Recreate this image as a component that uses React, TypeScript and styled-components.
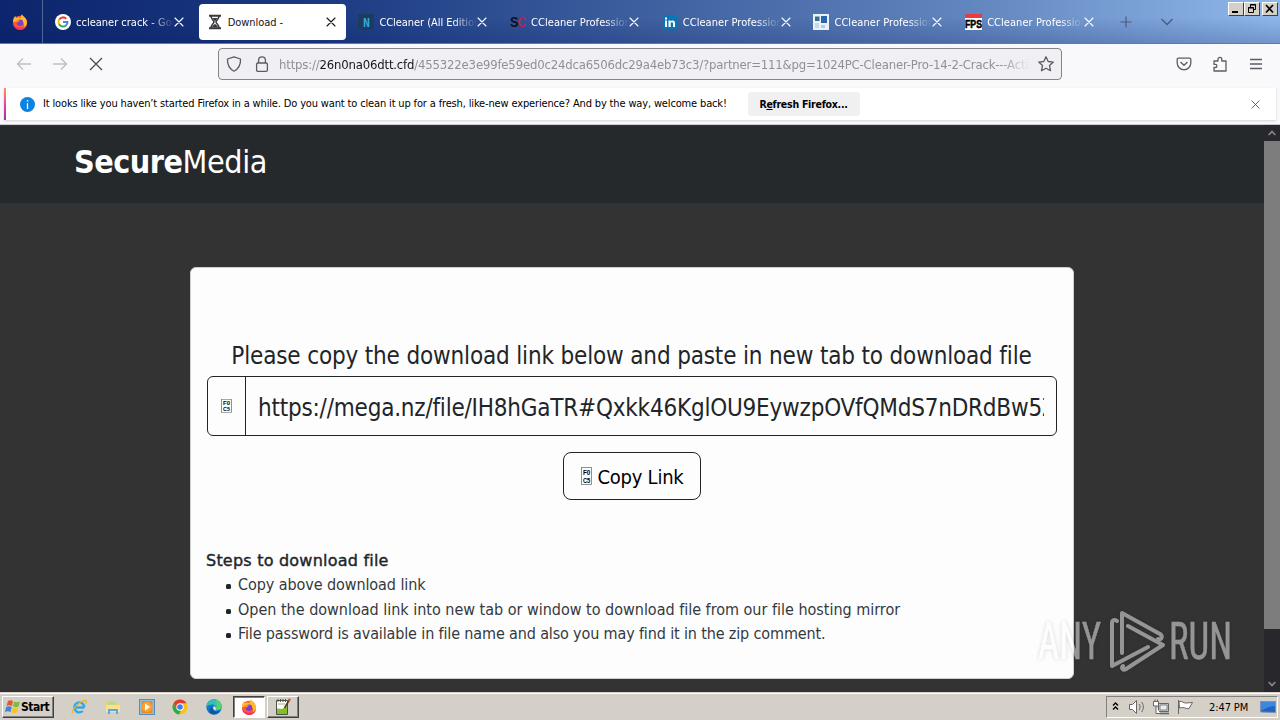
import React from 'react'

import styled, { createGlobalStyle } from 'styled-components'

const UI_FONT = `'DejaVu Sans Condensed', 'DejaVu Sans', 'Noto Sans', sans-serif`

const GlobalStyle = createGlobalStyle`
  * {
    box-sizing: border-box;
  }
  body {
    margin: 0;
    overflow: hidden;
    font-family: ${UI_FONT};
    font-stretch: condensed;
    color: #000;
  }
`

const Screen = styled.div`
  position: relative;
  width: 1280px;
  height: 720px;
  display: flex;
  flex-direction: column;
  overflow: hidden;
`

const TabBar = styled.div`
  display: flex;
  height: 44px;
  flex: none;
  background: linear-gradient(to bottom, transparent 40%, rgba(0, 20, 90, 0.2)),
    linear-gradient(to right, #0c256c 0%, #1b3a82 25%, #3d5f9f 50%, #6084bd 75%, #8fb8ea 100%);
  border-bottom: 1px solid #6f7889;
`

const PinnedTab = styled.div`
  display: flex;
  align-items: center;
  width: 43px;
  padding-left: 12px;
  border-right: 1px solid #50689c;
`

const Tabs = styled.div`
  display: flex;
  padding: 4px 0 3px 4px;
`

const Tab = styled.div<{ $active?: boolean }>`
  display: flex;
  align-items: center;
  width: 147px;
  margin-right: 4.7px;
  padding: 0 10px 0 8px;
  border-radius: 4px;
  background: ${(p) => (p.$active ? '#fff' : 'transparent')};
  color: ${(p) => (p.$active ? '#15141a' : '#fff')};
  font-size: 11px;
`

const TabTitle = styled.span<{ $spacing: number; $fade: boolean }>`
  flex: 1;
  margin-left: 5px;
  padding-top: 2px;
  overflow: hidden;
  white-space: nowrap;
  line-height: 16px;
  letter-spacing: ${(p) => p.$spacing}px;
  mask-image: ${(p) => (p.$fade ? 'linear-gradient(to left, transparent, #000 24px)' : 'none')};
`

const TabActions = styled.div`
  display: flex;
  align-items: center;
  gap: 29px;
  margin: 1px 0 0 11px;
  color: #4a5a7d;
`

const WindowControls = styled.div`
  display: flex;
  margin: 2px 2px 0 auto;
`

const WindowButton = styled.div<{ $gap?: boolean }>`
  width: 16px;
  height: 14px;
  margin-left: ${(p) => (p.$gap ? 2 : 0)}px;
  background: #d4d0c8;
  border: 1px solid;
  border-color: #fff #404040 #404040 #fff;
  svg {
    display: block;
  }
`

const Toolbar = styled.div`
  display: flex;
  align-items: center;
  height: 44px;
  flex: none;
  padding: 0 16px;
  padding-bottom: 4px;
  background: #f9f9fb;
  color: #5b5b66;
`

const NavButtons = styled.div`
  display: flex;
  align-items: center;
  gap: 20px;
  width: 202px;
`

const UrlBar = styled.div`
  display: flex;
  align-items: center;
  width: 844px;
  height: 32px;
  padding: 0 7px;
  border: 1px solid #83838a;
  border-radius: 4px;
  background: #f0f0f4;
`

const UrlText = styled.div`
  width: 752px;
  margin: 0 7px 0 9px;
  padding-top: 2px;
  overflow: hidden;
  white-space: nowrap;
  font-size: 13px;
  line-height: 18px;
  letter-spacing: -0.18px;
  color: #8f8f98;
  mask-image: linear-gradient(to left, transparent, #000 32px);
  b {
    font-weight: 400;
    color: #15141a;
  }
`

const UrlIcon = styled.span`
  display: flex;
  margin-right: 12px;
`

const ToolbarActions = styled.div`
  display: flex;
  align-items: center;
  gap: 20px;
  margin-left: auto;
`

const NoticeArea = styled.div`
  height: 37px;
  flex: none;
  padding: 0 4px;
  background: #f9f9fb;
  border-bottom: 1px solid #c9c9cd;
`

const Notice = styled.div`
  display: flex;
  align-items: center;
  height: 32px;
  padding: 0 16px 0 14px;
  border-left: 2px solid;
  border-image: linear-gradient(#ff9a56, #e64fa0 45%, #952bb9) 1;
  background: #fff;
  box-shadow: 0 1px 2px rgba(58, 57, 68, 0.2);
  font-size: 11px;
`

const NoticeText = styled.span`
  width: 697px;
  margin: -2px 0 0 8px;
  white-space: nowrap;
  letter-spacing: -0.15px;
`

const RefreshButton = styled.button`
  width: 112px;
  height: 24px;
  margin-left: 8px;
  padding: 0 1px 0 0;
  border: 0;
  border-radius: 4px;
  background: #f0f0f1;
  font-family: ${UI_FONT};
  font-size: 10.5px;
  font-weight: 700;
  letter-spacing: -0.25px;
  white-space: nowrap;
`

const NoticeClose = styled.span`
  display: flex;
  margin-left: auto;
  color: #55555f;
`

const Viewport = styled.div`
  display: flex;
  height: 567px;
  flex: none;
`

const Page = styled.main`
  flex: 1;
  overflow: hidden;
  background: #333;
  color: #212529;
`

const SiteHeader = styled.header`
  height: 80px;
  padding: 13px 74px 0;
  border-top: 1px solid #333;
  border-bottom: 2px solid #2e3336;
  background: #25292c;
  color: #fff;
`

const Brand = styled.div`
  font-size: 32px;
  line-height: 46px;
  letter-spacing: -0.4px;
  white-space: nowrap;
  b {
    font-weight: 700;
    letter-spacing: -0.5px;
  }
`

const Card = styled.section`
  width: 884px;
  height: 412px;
  margin: 62px auto 0 190px;
  padding: 70px 16px 0 15px;
  border: 1px solid #d0d0d0;
  border-radius: 6px;
  background: #fdfdfd;
`

const Prompt = styled.h1`
  margin: 0;
  text-align: center;
  font-size: 24px;
  font-weight: 400;
  line-height: 36px;
  letter-spacing: -0.16px;
  white-space: nowrap;
`

const LinkGroup = styled.div`
  display: flex;
  width: 850px;
  height: 60px;
  margin: 2px 0 0 1px;
  border: 1px solid #212529;
  border-radius: 6px;
`

const LinkIcon = styled.div`
  display: flex;
  align-items: center;
  justify-content: center;
  width: 38px;
  border-right: 1px solid #212529;
`

const LinkText = styled.div`
  flex: 1;
  margin: 0 12px;
  padding-top: 1px;
  overflow: hidden;
  white-space: nowrap;
  font-size: 24px;
  line-height: 60px;
  letter-spacing: -0.21px;
`

const CopyButton = styled.button`
  display: flex;
  align-items: center;
  justify-content: center;
  gap: 6px;
  width: 138px;
  height: 48px;
  margin: 16px auto 0 357px;
  padding: 0;
  border: 1px solid #212529;
  border-radius: 8px;
  background: transparent;
  font-family: ${UI_FONT};
  font-size: 20px;
  letter-spacing: -0.25px;
  color: #000;
  white-space: nowrap;
`

const CopyLabel = styled.span`
  padding-top: 2px;
`

const Steps = styled.div`
  margin-top: 49px;
  font-size: 16px;
  line-height: 24.4px;
`

const StepsTitle = styled.div`
  font-family: 'DejaVu Sans', sans-serif;
  font-stretch: normal;
  -webkit-text-stroke: 0.4px #212529;
  letter-spacing: 0.22px;
`

const StepList = styled.ul`
  margin: 0;
  padding: 0 0 0 20px;
  list-style: none;
`

const Step = styled.li<{ $spacing: number }>`
  display: flex;
  align-items: center;
  white-space: nowrap;
  color: #35393d;
  letter-spacing: ${(p) => p.$spacing}px;
  &::before {
    content: '';
    width: 5px;
    height: 5px;
    margin: 2px 7px 0 0;
    border-radius: 1.5px;
    background: #212529;
  }
`

const Scrollbar = styled.div`
  display: flex;
  flex-direction: column;
  align-items: center;
  width: 16px;
  background: #28272c;
  color: #85858b;
`

const ScrollArrow = styled.div`
  display: flex;
  align-items: center;
  height: 16px;
`

const ScrollThumb = styled.div`
  width: 16px;
  height: 488px;
  margin-bottom: auto;
  background: #7d7d7d;
`

const Taskbar = styled.div`
  display: flex;
  height: 28px;
  flex: none;
  padding-top: 3px;
  border-top: 1px solid #d4d0c8;
  background: #d4d0c8;
  box-shadow: inset 0 1px 0 #fff;
  font-size: 11px;
`

const StartButton = styled.div`
  display: flex;
  align-items: center;
  width: 52px;
  height: 22px;
  margin: 0 17px 0 2px;
  padding-left: 2px;
  border: 1px solid;
  border-color: #fff #404040 #404040 #fff;
  box-shadow: inset -1px -1px 0 #808080;
  font-size: 12px;
  font-weight: 700;
  letter-spacing: -0.5px;
`

const QuickLaunch = styled.div`
  display: flex;
  align-items: center;
  height: 22px;
  width: 162px;
  gap: 17.8px;
`

const TaskButton = styled.div<{ $pressed?: boolean }>`
  display: flex;
  align-items: center;
  justify-content: center;
  width: 32px;
  height: 22px;
  margin-right: 2px;
  border: 1px solid;
  border-color: ${(p) => (p.$pressed ? '#404040 #fff #fff #404040' : '#fff #404040 #404040 #fff')};
  box-shadow: ${(p) => (p.$pressed ? 'inset 1px 1px 0 #808080' : 'inset -1px -1px 0 #808080')};
  background: ${(p) => (p.$pressed ? '#fff' : 'transparent')};
`

const Tray = styled.div`
  display: flex;
  align-items: center;
  width: 172px;
  height: 22px;
  margin: 0 2px 0 auto;
  padding-left: 5px;
  border: 1px solid;
  border-color: #808080 #fff #fff #808080;
`

const Clock = styled.span`
  width: 41px;
  margin: 0 10px 0 15px;
  white-space: nowrap;
  letter-spacing: -0.1px;
`

const Watermark = styled.svg`
  position: absolute;
  left: 1034px;
  top: 604px;
  filter: drop-shadow(0 0 2px rgba(0, 0, 0, 0.3));
`

const CloseIcon = ({ size = 10, width = 1.1 }: { size?: number; width?: number }) => (
  <svg width={size} height={size} viewBox="0 0 10 10" stroke="currentColor" strokeWidth={width} strokeLinecap="round">
    <path d="M1 1l8 8M9 1L1 9" />
  </svg>
)

const FirefoxIcon = () => (
  <svg width="16" height="16" viewBox="0 0 16 16">
    <circle cx="8" cy="8.8" r="7" fill="#ff5a35" />
    <path d="M1 8C.8 5.500 2 3 3.300 2l.8 2C6 3 8 3.500 9 4 8.500 2.500 9 1 10 .2c.5 2 4.800 3.300 5 8 0 3-2 5.500-4 6.500 2-3 1.500-7-2-8z" fill="#ffb92c" />
    <path d="M1 9c0 4 3.400 7 7 7 3.500 0 6.500-2 7-5.800-2 3-4.500 4-7 3.500C4 13.300 2 11.500 1 9z" fill="#f5315c" />
    <circle cx="8" cy="8.800" r="3.200" fill="#7b3fd0" />
    <path d="M3.500 6.500c2-1 3.500-.5 5 .2-1 .2-2.200.8-2.500 1.900-1.200-.2-2.200-1-2.500-2.100z" fill="#ff8b21" />
  </svg>
)

const GoogleIcon = () => (
  <svg width="16" height="16" viewBox="0 0 16 16" fill="none" strokeWidth="2">
    <circle cx="8" cy="8" r="8" fill="#fff" />
    <path d="M4.200 5.500A4.500 4.500 0 0 1 11.300 4.800" stroke="#ea4335" />
    <path d="M4.100 10.300a4.600 4.600 0 0 1 0-4.700" stroke="#fbbc05" />
    <path d="M11 11.400a4.500 4.500 0 0 1-6.900-1.100" stroke="#34a853" />
    <path d="M8 8h4.500c0 1.400-.5 2.600-1.600 3.500" stroke="#4285f4" />
  </svg>
)

const HourglassIcon = () => (
  <svg width="16" height="16" viewBox="0 0 16 16" fill="none" stroke="#38383d" strokeWidth="1.500">
    <path d="M2 1.700h12M2 14.300h12" strokeWidth="2" />
    <path d="M4 2c0 3.500 3 4.500 3 6s-3 2.500-3 6M12 2c0 3.500-3 4.500-3 6s3 2.500 3 6" />
    <path d="M5.500 4h5L8 7.500zM5 13.500c.5-2 2-3 3-3.500 1 .5 2.500 1.500 3 3.500z" fill="#38383d" stroke="none" />
  </svg>
)

const LetterN = () => (
  <svg width="16" height="16" viewBox="0 0 16 16">
    <rect width="16" height="16" fill="#1d3a63" />
    <text x="5" y="12.500" fontSize="13" fontWeight="700" fill="#32a9d6" textLength="7" lengthAdjust="spacingAndGlyphs">N</text>
  </svg>
)

const LettersSC = () => (
  <svg width="16" height="16" viewBox="0 0 16 16" fontFamily="Liberation Sans" fontSize="15" fontWeight="700">
    <text x="0" y="12.500" fill="#0b1024" textLength="8.500" lengthAdjust="spacingAndGlyphs">S</text>
    <text x="7.500" y="12.500" fill="#b52350" textLength="8.500" lengthAdjust="spacingAndGlyphs">C</text>
  </svg>
)

const LinkedinIcon = () => (
  <svg width="16" height="16" viewBox="0 0 16 16">
    <rect x="1" y="1" width="14" height="14" rx="1" fill="#0a77b5" />
    <path d="M3 6.500h2V13H3zM3 3.500h2v2H3zM6.500 6.500h2v1c1-1.700 4.500-1.600 4.500 1.500v4h-2V9.500c0-1.700-2.300-1.700-2.300 0V13H6.500z" fill="#fff" />
  </svg>
)

const SquaresIcon = () => (
  <svg width="16" height="16" viewBox="0 0 16 16">
    <rect width="16" height="16" fill="#e9f2fa" />
    <path d="M2 2.500h4.500V7H2z" fill="#376f86" />
    <path d="M8 2h6v7H8z" fill="#2b63ad" />
    <path d="M2 9h4v5H2z" fill="#c4d8ef" />
    <path d="M8 11h4v3H8z" fill="#b3cbe8" />
  </svg>
)

const FpsIcon = () => (
  <svg width="17" height="16" viewBox="0 0 17 16">
    <rect width="17" height="16" fill="#fff" />
    <rect width="17" height="4" fill="#e83b42" />
    <text x="0" y="13.500" fontFamily="Liberation Sans" fontSize="10" fontWeight="700" stroke="#000" strokeWidth=".5" textLength="17" lengthAdjust="spacingAndGlyphs">FPS</text>
  </svg>
)

// Box the browser shows for a private-use code point it has no glyph for
const MissingGlyph = ({ height = 18 }: { height?: number }) => (
  <svg width="11" height={height} viewBox="0 0 11 18" fontFamily="Liberation Sans" fontSize="8" fontWeight="700" preserveAspectRatio="none">
    <rect x=".5" y=".5" width="10" height="17" fill="none" stroke="#777" strokeWidth=".8" />
    <text x="2" y="8.300" textLength="7" lengthAdjust="spacingAndGlyphs">F0</text>
    <text x="2" y="15.800" textLength="7" lengthAdjust="spacingAndGlyphs">C5</text>
  </svg>
)

const StartFlag = () => (
  <svg width="16" height="16" viewBox="0 0 16 16">
    <path d="M3 2c2-1 3-.8 5 0L7 7C5 6 3.500 6 1.500 7z" fill="#e8582b" />
    <path d="M9 2.500c2 1 4 1 6 0l-1.500 5c-2 1-3.500.8-5.500 0z" fill="#7dbb42" />
    <path d="M1.200 8c2-1 3.500-1 5.500 0l-1.200 5C3.500 12 2 12 0 13z" fill="#3d86d8" />
    <path d="M7.700 8.500c2 1 3.500 1 5.500 0L12 13.500c-2 1-3.500 1-5.500 0z" fill="#f6c32c" />
  </svg>
)

const ExplorerIcon = () => (
  <svg width="16" height="16" viewBox="0 0 16 16" fill="none">
    <path d="M13.300 8.500H4.200M13.300 8.500a5 5 0 1 0-1.500 3.500" stroke="#35a6e5" strokeWidth="2.300" />
    <path d="M1.500 14.500c-2-3 8-13 12.500-13 2 0 1.500 2 .5 3.500" stroke="#e9b72b" strokeWidth="1.300" />
  </svg>
)

const FolderIcon = () => (
  <svg width="16" height="16" viewBox="0 0 16 16">
    <path d="M1 3h5l1 1.500h7V13H1z" fill="#efcf66" />
    <path d="M3 2h8v4H3z" fill="#b9dc8c" />
    <path d="M1 6h14v7H1z" fill="#f7e293" />
    <path d="M3 15v-5h10v5h-2v-3H5v3z" fill="#58a9df" />
  </svg>
)

const MediaIcon = () => (
  <svg width="16" height="16" viewBox="0 0 16 16">
    <rect x=".5" y=".5" width="15" height="15" fill="#8cbfe6" stroke="#4d8fc6" />
    <rect x="2.500" y="2" width="11" height="12" fill="#f28a17" />
    <circle cx="8" cy="8" r="5" fill="#f9a43b" />
    <path d="M6 4.500L11 8l-5 3.500z" fill="#fff" />
  </svg>
)

const ChromeIcon = () => (
  <svg width="16" height="16" viewBox="0 0 16 16">
    <circle cx="8" cy="8" r="7.500" fill="#fbc116" />
    <path d="M1.500 4.300A7.500 7.500 0 0 1 14.500 4.300H8L5 10z" fill="#e33b2e" />
    <path d="M1.500 4.300L5 10l4 1.500-2 4A7.500 7.500 0 0 1 1.500 4.300z" fill="#2da94f" />
    <circle cx="8" cy="8" r="3.700" fill="#fff" />
    <circle cx="8" cy="8" r="2.800" fill="#3f7fe8" />
  </svg>
)

const EdgeIcon = () => (
  <svg width="16" height="16" viewBox="0 0 16 16">
    <circle cx="8" cy="8" r="7.700" fill="#1279c9" />
    <path d="M.4 7.500C1.500 1.500 7-.5 11 1c4 1.500 5.500 5.500 4.500 8-.8 2-4.500 2.500-6 1.300C10.500 9 9.500 5.500 6 5.500c-2.500 0-4.500 1-5.600 2z" fill="#35c0b2" />
    <path d="M10 .8c4.500 1 6.500 5.500 5.500 8.200-.8 2-4.500 2.500-6 1.300 2-2.500 1.500-5 .5-9.500z" fill="#58d16b" />
    <path d="M6.500 7.500c-1 3 1.500 5.500 4.500 5 1.500-.2 2.500-.7 3.300-1.200-2 4-7 5-9.300 3.200-3-2.500-1.500-6 1.500-7z" fill="#12579e" />
    <path d="M7.500 7.500c-1 2.500 1 4.300 4 4-1.500-.3-2.300-.8-2-1.300.8-1 .3-3-2-2.700z" fill="#e8f6fa" />
  </svg>
)

const NotepadIcon = () => (
  <svg width="18" height="18" viewBox="0 0 18 18">
    <path d="M2.500 2.500h11v14h-11z" fill="#fcfcf5" stroke="#4a5145" />
    <path d="M4 1v3M6.500 1v3M9 1v3M11.500 1v3" stroke="#555" />
    <path d="M4 6h7" stroke="#aaa" />
    <path d="M3 10.500l5 .5 5-3V16H3z" fill="#88bd26" />
    <path d="M10.500 10l5-8.500" stroke="#5b3b1c" strokeWidth="1.600" />
    <path d="M14.800 3L16 .8" stroke="#cf5630" strokeWidth="2" />
  </svg>
)

const TrayIcons = () => (
  <svg width="82" height="16" viewBox="0 0 82 16" fill="none" stroke="#666">
    <path d="M1 6.500l2.500-2.500L6 6.500M1 10.500L3.500 8 6 10.500" stroke="#000" strokeWidth="1.400" />
    <path d="M17.500 5.500h3l4-4v13l-4-4h-3z" fill="#fff" />
    <path d="M27 5c1.500 2 1.500 4 0 6M29.500 3c2.500 3 2.500 7 0 10" />
    <path d="M46.500 4.500h10v8h-10z" fill="#c4c8cc" />
    <path d="M48 6h7v5h-7z" fill="#eee" stroke="#888" />
    <path d="M48 14.500h9" strokeWidth="1.600" />
    <path d="M41.500 2.500h5V7h-5zM43 .5v2M45.500.5v2M44 7v7.500h4" fill="#fff" />
    <path d="M66.500 1v14" />
    <path d="M67 2.500c3-1 5 2 7 1.500l6.500-.5-3.500 6c-3 1-4-2-9.500-.5z" fill="#fff" />
  </svg>
)

const TABS = [
  { title: 'ccleaner crack - Google Search', icon: <GoogleIcon />, spacing: 0 },
  { title: 'Download -', icon: <HourglassIcon />, active: true, spacing: -0.05 },
  { title: 'CCleaner (All Editions)', icon: <LetterN />, spacing: -0.05 },
  { title: 'CCleaner Professional', icon: <LettersSC />, spacing: 0.05 },
  { title: 'CCleaner Professional', icon: <LinkedinIcon />, spacing: 0.05 },
  { title: 'CCleaner Professional', icon: <SquaresIcon />, spacing: 0.05 },
  { title: 'CCleaner Professional', icon: <FpsIcon />, spacing: 0.05 },
]

const STEPS = [
  { text: 'Copy above download link', spacing: -0.08 },
  { text: 'Open the download link into new tab or window to download file from our file hosting mirror', spacing: -0.01 },
  { text: 'File password is available in file name and also you may find it in the zip comment.', spacing: -0.14 },
]

function BrowserTabs() {
  return (
    <TabBar>
      <PinnedTab>
        <FirefoxIcon />
      </PinnedTab>
      <Tabs>
        {TABS.map((tab, i) => (
          <Tab key={i} $active={tab.active}>
            {tab.icon}
            <TabTitle $spacing={tab.spacing} $fade={!tab.active}>
              {tab.title}
            </TabTitle>
            <CloseIcon />
          </Tab>
        ))}
      </Tabs>
      <TabActions>
        <svg width="12" height="12" viewBox="0 0 12 12" stroke="currentColor" strokeWidth="1.200">
          <path d="M6 .5v11M.5 6h11" />
        </svg>
        <svg width="12" height="12" viewBox="0 0 12 12" fill="none" stroke="currentColor" strokeWidth="1.300">
          <path d="M.5 3L6 8.500 11.500 3" />
        </svg>
      </TabActions>
      <WindowControls>
        <WindowButton>
          <svg width="14" height="12" viewBox="0 0 14 12">
            <path d="M3 8h6v2H3z" />
          </svg>
        </WindowButton>
        <WindowButton>
          <svg width="14" height="12" viewBox="0 0 14 12" fill="none" stroke="#000">
            <path d="M5.500 4V1.500h5v5H9M5 2h6M3.500 4.500h5v5h-5zM3 5h6" />
          </svg>
        </WindowButton>
        <WindowButton $gap>
          <svg width="14" height="12" viewBox="0 0 14 12" stroke="#000" strokeWidth="1.700">
            <path d="M3 2l7 7.500M10 2l-7 7.500" />
          </svg>
        </WindowButton>
      </WindowControls>
    </TabBar>
  )
}

function AddressBar() {
  return (
    <Toolbar>
      <NavButtons>
        <svg width="16" height="16" viewBox="0 0 16 16" fill="none" stroke="#bdbdc4" strokeWidth="1.300">
          <path d="M15 8H1.500M7 2.500L1.500 8 7 13.500" />
        </svg>
        <svg width="16" height="16" viewBox="0 0 16 16" fill="none" stroke="#bdbdc4" strokeWidth="1.300">
          <path d="M1 8h13.500M9 2.500L14.500 8 9 13.500" />
        </svg>
        <svg width="16" height="16" viewBox="0 0 16 16" fill="none" stroke="#4b4b55" strokeWidth="1.300">
          <path d="M2 2l12 12M14 2L2 14" />
        </svg>
      </NavButtons>
      <UrlBar>
        <UrlIcon>
          <svg width="16" height="16" viewBox="0 0 16 16" fill="none" stroke="currentColor" strokeWidth="1.300">
            <path d="M8 .8L14.500 3c.3 5-1.500 9.500-6.500 12.200C3 12.500 1.200 8 1.500 3z" strokeLinejoin="round" />
          </svg>
        </UrlIcon>
        <svg width="16" height="16" viewBox="0 0 16 16" fill="none" stroke="currentColor" strokeWidth="1.300">
          <rect x="2.600" y="7" width="10.800" height="8.300" rx="1.300" />
          <path d="M4.600 7V4.300a3.400 3.400 0 0 1 6.800 0V7" />
        </svg>
        <UrlText>
          https://<b>26n0na06dtt.cfd</b>/455322e3e99fe59ed0c24dca6506dc29a4eb73c3/?partner=111&amp;pg=1024PC-Cleaner-Pro-14-2-Crack---Activ
        </UrlText>
        <svg width="16" height="16" viewBox="0 0 16 16" fill="none" stroke="currentColor" strokeWidth="1.300" strokeLinejoin="round">
          <path d="M8 .8l2.200 4.700 5.100.6-3.800 3.500 1 5.100L8 12.200l-4.500 2.500 1-5.100L.7 6.100l5.100-.6z" />
        </svg>
      </UrlBar>
      <ToolbarActions>
        <svg width="16" height="16" viewBox="0 0 16 16" fill="none" stroke="currentColor" strokeWidth="1.300">
          <path d="M2.500 2.200h11c.8 0 1.300.5 1.300 1.300V7a6.800 6.800 0 0 1-13.600 0V3.500c0-.8.5-1.300 1.300-1.300z" />
          <path d="M4.500 6L8 9.300 11.500 6" />
        </svg>
        <svg width="16" height="16" viewBox="0 0 16 16" fill="none" stroke="currentColor" strokeWidth="1.300" strokeLinejoin="round">
          <path d="M2 5h4V3.200a1.900 1.900 0 0 1 3.800 0V5H14v10H2v-3.500h1.300a1.600 1.600 0 0 0 0-3.200H2z" />
        </svg>
        <svg width="16" height="16" viewBox="0 0 16 16" stroke="currentColor" strokeWidth="1.300">
          <path d="M2 3.500h12M2 8h12M2 12.500h12" />
        </svg>
      </ToolbarActions>
    </Toolbar>
  )
}

function RefreshNotice() {
  return (
    <NoticeArea>
      <Notice>
        <svg width="15" height="15" viewBox="0 0 15 15">
          <circle cx="7.500" cy="7.500" r="7.500" fill="#0a84e0" />
          <path d="M7.500 3v1.600M7.500 6.200V12" stroke="#fff" strokeWidth="1.300" />
        </svg>
        <NoticeText>
          It looks like you haven’t started Firefox in a while. Do you want to clean it up for a fresh, like-new
          experience? And by the way, welcome back!
        </NoticeText>
        <RefreshButton>
          R<u>e</u>fresh Firefox...
        </RefreshButton>
        <NoticeClose>
          <CloseIcon size={9} width={1} />
        </NoticeClose>
      </Notice>
    </NoticeArea>
  )
}

function DownloadPage() {
  return (
    <Page>
      <SiteHeader>
        <Brand>
          <b>Secure</b>Media
        </Brand>
      </SiteHeader>
      <Card>
        <Prompt>Please copy the download link below and paste in new tab to download file</Prompt>
        <LinkGroup>
          <LinkIcon>
            <MissingGlyph height={14} />
          </LinkIcon>
          <LinkText>https://mega.nz/file/IH8hGaTR#Qxkk46KglOU9EywzpOVfQMdS7nDRdBw5Z</LinkText>
        </LinkGroup>
        <CopyButton>
          <MissingGlyph />
          <CopyLabel>Copy Link</CopyLabel>
        </CopyButton>
        <Steps>
          <StepsTitle>Steps to download file</StepsTitle>
          <StepList>
            {STEPS.map((step) => (
              <Step key={step.text} $spacing={step.spacing}>
                {step.text}
              </Step>
            ))}
          </StepList>
        </Steps>
      </Card>
    </Page>
  )
}

function WindowsTaskbar() {
  return (
    <Taskbar>
      <StartButton>
        <StartFlag />
        Start
      </StartButton>
      <QuickLaunch>
        <ExplorerIcon />
        <FolderIcon />
        <MediaIcon />
        <ChromeIcon />
        <EdgeIcon />
      </QuickLaunch>
      <TaskButton $pressed>
        <FirefoxIcon />
      </TaskButton>
      <TaskButton>
        <NotepadIcon />
      </TaskButton>
      <Tray>
        <TrayIcons />
        <Clock>2:47 PM</Clock>
        <svg width="16" height="14" viewBox="0 0 16 14">
          <path d="M.5 1.500h15v11l-15-.5z" fill="#1d63c4" stroke="#7b93b3" />
          <path d="M1 2h14v4C10 6 6 8 1 11z" fill="#3f87dc" />
        </svg>
      </Tray>
    </Taskbar>
  )
}

export default function App() {
  return (
    <Screen>
      <GlobalStyle />
      <BrowserTabs />
      <AddressBar />
      <RefreshNotice />
      <Viewport>
        <DownloadPage />
        <Scrollbar>
          <ScrollArrow>
            <svg width="8" height="6" viewBox="0 0 8 6" fill="none" stroke="currentColor" strokeWidth="1.800">
              <path d="M.7 5L4 1.500 7.300 5" />
            </svg>
          </ScrollArrow>
          <ScrollThumb />
          <ScrollArrow>
            <svg width="8" height="6" viewBox="0 0 8 6" fill="none" stroke="currentColor" strokeWidth="1.800">
              <path d="M.7 1L4 4.500 7.300 1" />
            </svg>
          </ScrollArrow>
        </Scrollbar>
      </Viewport>
      <WindowsTaskbar />
      <Watermark width="204" height="72" viewBox="0 0 204 72" fill="#fff" fontFamily="Roboto" fontSize="51" opacity=".48">
        <text x="4" y="55" textLength="63" lengthAdjust="spacingAndGlyphs" stroke="#fff" strokeWidth=".5">ANY</text>
        <text x="135" y="55" textLength="63" lengthAdjust="spacingAndGlyphs" stroke="#fff" strokeWidth=".5">RUN</text>
        <g fill="none" stroke="#fff" strokeWidth="4" strokeLinejoin="round" strokeLinecap="round">
          <path d="M83 17c-2-2-5-1-5 2v43l36-19" />
          <path d="M88 49V9l38 21c3 2 2 6-2 5" />
          <path d="M94 22l35 19-37 24c-3 2-5-1-3-3" />
        </g>
      </Watermark>
    </Screen>
  )
}
